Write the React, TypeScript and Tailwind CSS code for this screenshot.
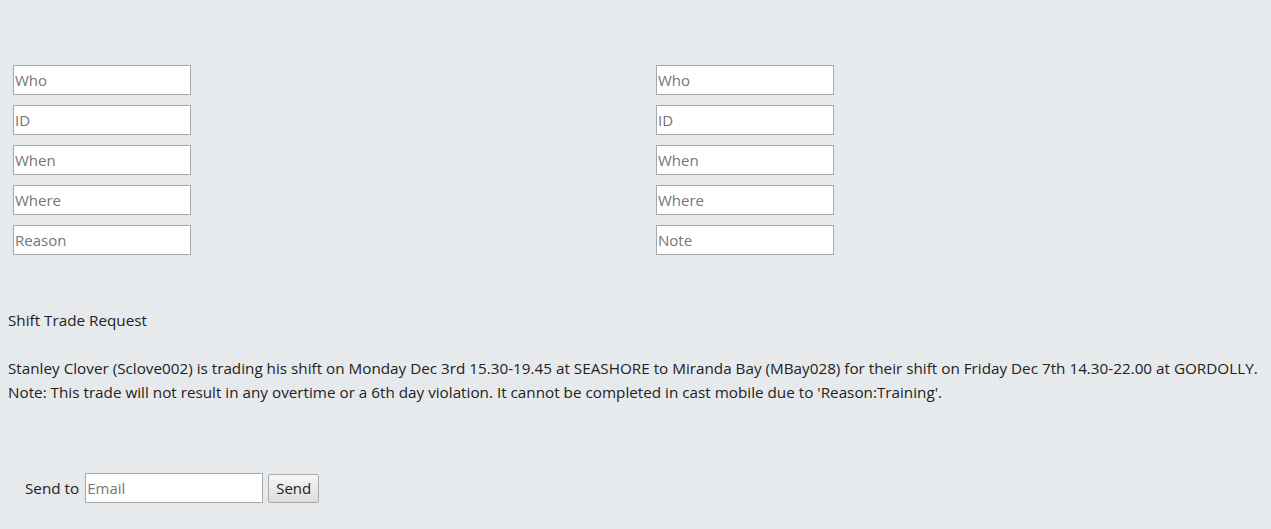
import React from 'react';

const inputCls =
    'block w-[178px] h-[30px] border border-[#a9a9a9] bg-white px-[1px] text-[15px] text-[#222] placeholder-[#767676] outline-none';

function FieldColumn({ fields }: { fields: string[] }) {
    return (
        <div className="flex flex-col gap-[10px]">
            {fields.map((f) => (
                <input key={f} type="text" placeholder={f} className={inputCls} />
            ))}
        </div>
    );
}

export default function App() {
    return (
        <div
            className="min-h-[529px] bg-[#e7eaed] text-[#222] text-[15.25px]"
            style={{ fontFamily: '"Open Sans", "Noto Sans", sans-serif' }}
        >
            <div className="grid grid-cols-[643px_1fr] pl-[13px] pt-[65px]">
                <FieldColumn fields={['Who', 'ID', 'When', 'Where', 'Reason']} />
                <FieldColumn fields={['Who', 'ID', 'When', 'Where', 'Note']} />
            </div>

            <div className="px-[8px] pt-[53px]">
                <p className="leading-[24px]">Shift Trade Request</p>
                <p className="mt-[24px] leading-[24px] whitespace-nowrap">
                    Stanley Clover (Sclove002) is trading his shift on Monday Dec 3rd 15.30-19.45 at SEASHORE to Miranda
                    Bay (MBay028) for their shift on Friday Dec 7th 14.30-22.00 at GORDOLLY.
                    <br />
                    Note: This trade will not result in any overtime or a 6th day violation. It cannot be completed in cast
                    mobile due to 'Reason:Training'.
                </p>
            </div>

            <div className="flex items-center pl-[25px] pt-[69px]">
                <span className="mr-[6px]">Send to</span>
                <input type="email" placeholder="Email" className={inputCls} />
                <button className="ml-[5px] h-[29px] w-[51px] border border-[#a9a9a9] rounded-[2px] bg-gradient-to-b from-[#f6f6f6] to-[#dedede] text-[15px] text-[#222]">
                    Send
                </button>
            </div>
        </div>
    );
}
